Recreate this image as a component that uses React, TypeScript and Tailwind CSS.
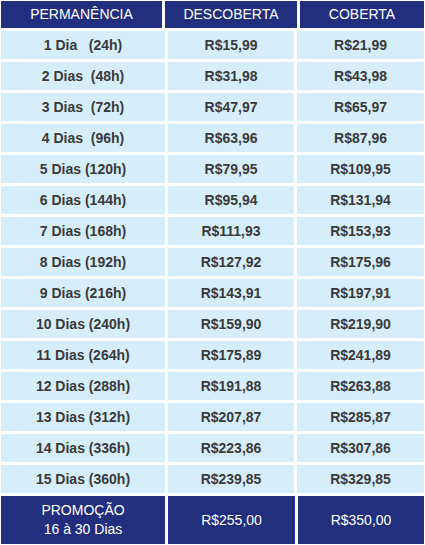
const rows = [
  ['1 Dia   (24h)', 'R$15,99', 'R$21,99'],
  ['2 Dias  (48h)', 'R$31,98', 'R$43,98'],
  ['3 Dias  (72h)', 'R$47,97', 'R$65,97'],
  ['4 Dias  (96h)', 'R$63,96', 'R$87,96'],
  ['5 Dias (120h)', 'R$79,95', 'R$109,95'],
  ['6 Dias (144h)', 'R$95,94', 'R$131,94'],
  ['7 Dias (168h)', 'R$111,93', 'R$153,93'],
  ['8 Dias (192h)', 'R$127,92', 'R$175,96'],
  ['9 Dias (216h)', 'R$143,91', 'R$197,91'],
  ['10 Dias (240h)', 'R$159,90', 'R$219,90'],
  ['11 Dias (264h)', 'R$175,89', 'R$241,89'],
  ['12 Dias (288h)', 'R$191,88', 'R$263,88'],
  ['13 Dias (312h)', 'R$207,87', 'R$285,87'],
  ['14 Dias (336h)', 'R$223,86', 'R$307,86'],
  ['15 Dias (360h)', 'R$239,85', 'R$329,85'],
];

export default function App() {
  return (
    <div className="w-[425px] h-[545px] bg-white pl-[1px] pt-[1px] font-['Liberation_Sans',Arial,sans-serif] text-[14px]">
      <div className="flex w-[423px] flex-col gap-[3px]">
        {/* cabeçalho */}
        <div className="grid h-[27px] grid-cols-[161px_132px_124px] gap-[3px] text-white">
          <div className="flex items-center justify-center bg-[#222e7e]">PERMANÊNCIA</div>
          <div className="flex items-center justify-center bg-[#222e7e]">DESCOBERTA</div>
          <div className="flex items-center justify-center bg-[#222e7e]">COBERTA</div>
        </div>

        {rows.map(([tempo, desc, cob]) => (
          <div
            key={tempo}
            className="grid h-[28px] grid-cols-[164px_126px_127px] gap-[3px] font-bold text-[#3a3a3a]"
          >
            <div className="flex items-center justify-center whitespace-pre bg-[#d6eefc]">{tempo}</div>
            <div className="flex items-center justify-center bg-[#d6eefc]">{desc}</div>
            <div className="flex items-center justify-center bg-[#d6eefc]">{cob}</div>
          </div>
        ))}

        <div className="grid h-[48px] grid-cols-[164px_127px_126px] gap-[3px] text-white">
          <div className="flex flex-col items-center justify-center bg-[#222e7e] leading-[19px]">
            <span>PROMOÇÃO</span>
            <span>16 à 30 Dias</span>
          </div>
          <div className="flex items-center justify-center bg-[#222e7e]">R$255,00</div>
          <div className="flex items-center justify-center bg-[#222e7e]">R$350,00</div>
        </div>
      </div>
    </div>
  );
}
